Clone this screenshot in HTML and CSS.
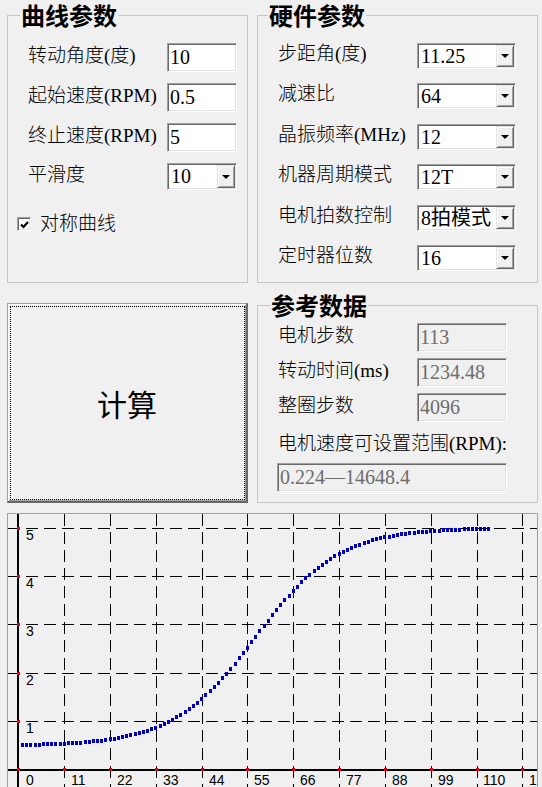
FILE: index.html
```html
<!DOCTYPE html>
<html lang="zh-CN">
<head>
<meta charset="utf-8">
<title>步进电机加减速曲线计算</title>
<link rel="stylesheet" href="styles.css">
</head>
<body>
<div class="app">
  <div class="row row-top">
    <fieldset class="group group-curve">
      <legend class="group-title">曲线参数</legend>
      <div class="form form-curve">
        <div class="field"><span class="label">转动角度(度)</span><div class="edit">10</div></div>
        <div class="field"><span class="label">起始速度(RPM)</span><div class="edit">0.5</div></div>
        <div class="field"><span class="label">终止速度(RPM)</span><div class="edit">5</div></div>
        <div class="field field-combo-sm"><span class="label">平滑度</span><div class="combo combo-sm"><span class="combo-value">10</span><span class="combo-btn"></span></div></div>
        <div class="check">
          <span class="check-box"><svg class="check-mark" viewBox="0 0 9 9" width="9" height="9"><path d="M1 4.5 L3.5 7 L8 2" /></svg></span>
          <span class="check-label">对称曲线</span>
        </div>
      </div>
    </fieldset>
    <fieldset class="group group-hw">
      <legend class="group-title">硬件参数</legend>
      <div class="form form-hw">
        <div class="field"><span class="label">步距角(度)</span><div class="combo"><span class="combo-value">11.25</span><span class="combo-btn"></span></div></div>
        <div class="field"><span class="label">减速比</span><div class="combo"><span class="combo-value">64</span><span class="combo-btn"></span></div></div>
        <div class="field"><span class="label">晶振频率(MHz)</span><div class="combo"><span class="combo-value">12</span><span class="combo-btn"></span></div></div>
        <div class="field"><span class="label">机器周期模式</span><div class="combo"><span class="combo-value">12T</span><span class="combo-btn"></span></div></div>
        <div class="field"><span class="label">电机拍数控制</span><div class="combo"><span class="combo-value">8拍模式</span><span class="combo-btn"></span></div></div>
        <div class="field"><span class="label">定时器位数</span><div class="combo"><span class="combo-value">16</span><span class="combo-btn"></span></div></div>
      </div>
    </fieldset>
  </div>

  <div class="row row-mid">
    <button class="calc" type="button">计算</button>
    <fieldset class="group group-ref">
      <legend class="group-title">参考数据</legend>
      <div class="form form-ref">
        <div class="field"><span class="label">电机步数</span><div class="edit edit-ro">113</div></div>
        <div class="field"><span class="label">转动时间(ms)</span><div class="edit edit-ro">1234.48</div></div>
        <div class="field"><span class="label">整圈步数</span><div class="edit edit-ro">4096</div></div>
        <div class="range-label">电机速度可设置范围(RPM):</div>
        <div class="edit edit-ro edit-range">0.224—14648.4</div>
      </div>
    </fieldset>
  </div>

  <div class="chart">
    <svg class="plot" id="plot" viewBox="8 514 529 288" width="529" height="288">
      <g class="grid">
        <line x1="8" y1="528.5" x2="537" y2="528.5"/>
        <line x1="8" y1="576.5" x2="537" y2="576.5"/>
        <line x1="8" y1="624.5" x2="537" y2="624.5"/>
        <line x1="8" y1="673.5" x2="537" y2="673.5"/>
        <line x1="8" y1="721.5" x2="537" y2="721.5"/>
        <line x1="64.5" y1="514" x2="64.5" y2="802"/>
        <line x1="110.5" y1="514" x2="110.5" y2="802"/>
        <line x1="156.5" y1="514" x2="156.5" y2="802"/>
        <line x1="202.5" y1="514" x2="202.5" y2="802"/>
        <line x1="247.5" y1="514" x2="247.5" y2="802"/>
        <line x1="293.5" y1="514" x2="293.5" y2="802"/>
        <line x1="339.5" y1="514" x2="339.5" y2="802"/>
        <line x1="385.5" y1="514" x2="385.5" y2="802"/>
        <line x1="431.5" y1="514" x2="431.5" y2="802"/>
        <line x1="477.5" y1="514" x2="477.5" y2="802"/>
        <line x1="522.5" y1="514" x2="522.5" y2="802"/>
      </g>
      <g class="axes">
        <line x1="8" y1="770" x2="537" y2="770"/>
        <line x1="18" y1="514" x2="18" y2="802"/>
      </g>
      <g class="ticks">
        <rect x="17" y="527" width="3" height="3"/>
        <rect x="17" y="575" width="3" height="3"/>
        <rect x="17" y="623" width="3" height="3"/>
        <rect x="17" y="672" width="3" height="3"/>
        <rect x="17" y="720" width="3" height="3"/>
        <rect x="17" y="768" width="3" height="3"/>
        <rect x="63" y="768" width="3" height="3"/>
        <rect x="109" y="768" width="3" height="3"/>
        <rect x="155" y="768" width="3" height="3"/>
        <rect x="201" y="768" width="3" height="3"/>
        <rect x="246" y="768" width="3" height="3"/>
        <rect x="292" y="768" width="3" height="3"/>
        <rect x="338" y="768" width="3" height="3"/>
        <rect x="384" y="768" width="3" height="3"/>
        <rect x="430" y="768" width="3" height="3"/>
        <rect x="476" y="768" width="3" height="3"/>
        <rect x="521" y="768" width="3" height="3"/>
      </g>
      <g class="labels">
        <text x="26" y="540">5</text>
        <text x="26" y="588">4</text>
        <text x="26" y="636">3</text>
        <text x="26" y="685">2</text>
        <text x="26" y="733">1</text>
        <text x="26" y="785">0</text>
        <text x="71" y="785">11</text>
        <text x="117" y="785">22</text>
        <text x="163" y="785">33</text>
        <text x="209" y="785">44</text>
        <text x="254" y="785">55</text>
        <text x="300" y="785">66</text>
        <text x="346" y="785">77</text>
        <text x="392" y="785">88</text>
        <text x="438" y="785">99</text>
        <text x="483" y="785">110</text>
        <text x="529" y="785">121</text>
      </g>
      <g class="curve" id="curve"></g>
    </svg>
  </div>
</div>
<script src="chart.js"></script>
</body>
</html>
```

FILE: styles.css
```css
* { box-sizing: border-box; }

html, body { margin: 0; padding: 0; }

body {
  width: 542px;
  height: 787px;
  overflow: hidden;
  background: #f0f0f0;
  color: #000;
  font-family: "Liberation Serif", "Noto Sans CJK SC", serif;
}

.app {
  display: flex;
  flex-direction: column;
  align-items: flex-start;
  padding-left: 7px;
}

.row {
  display: flex;
  align-items: flex-start;
  gap: 9px;
}

.row-mid { margin-top: 7px; }

/* group boxes */
.group {
  margin: 0;
  padding: 0;
  min-width: 0;
  border: 1px solid #c6c6c6;
}

.group-curve { width: 241px; height: 283px; }
.group-hw { width: 281px; height: 283px; }
.group-ref { width: 281px; height: 213px; }

.group-title {
  padding: 0 1px;
  font-family: "Noto Sans CJK SC", sans-serif;
  font-weight: 700;
  font-size: 24px;
  line-height: 30px;
}

.group-curve .group-title { margin-left: 12px; }
.group-hw .group-title { margin-left: 10px; }
.group-ref .group-title { margin-left: 12px; }

/* forms */
.form {
  display: flex;
  flex-direction: column;
}

.form-curve { padding-top: 13px; gap: 11px; }
.form-hw { padding-top: 13px; gap: 14.4px; }
.form-ref { padding-top: 3px; gap: 6px; }

.field {
  display: flex;
  align-items: center;
  padding-left: 20px;
}

.label {
  width: 139px;
  flex: none;
  font-size: 19px;
  font-weight: 300;
  line-height: 22px;
  padding-bottom: 4px;
  white-space: nowrap;
}

/* edit boxes */
.edit {
  width: 70px;
  height: 29px;
  padding: 0 0 0 2px;
  background: #fff;
  border: 1px solid;
  border-color: #a0a0a0 #ffffff #ffffff #a0a0a0;
  box-shadow: inset 1px 1px 0 #696969, inset -1px -1px 0 #e3e3e3;
  font-size: 20px;
  line-height: 27px;
  white-space: nowrap;
}

.edit-ro {
  width: 90px;
  background: #f0f0f0;
  color: #6d6d6d;
}

.edit-range {
  width: 230px;
  margin-left: 19px;
}

.range-label {
  margin-top: 5px;
  padding-left: 20px;
  height: 24px;
  font-size: 19px;
  font-weight: 300;
  line-height: 22px;
  white-space: nowrap;
}

/* combo boxes */
.combo {
  display: flex;
  width: 99px;
  height: 26px;
  padding: 1px;
  background: #fff;
  border: 1px solid;
  border-color: #a0a0a0 #ffffff #ffffff #a0a0a0;
  box-shadow: inset 1px 1px 0 #696969, inset -1px -1px 0 #e3e3e3;
}

.combo-sm {
  width: 70px;
  height: 27px;
}

.combo-value {
  flex: 1;
  min-width: 0;
  padding-left: 2px;
  font-size: 20px;
  line-height: 22px;
  white-space: nowrap;
  overflow: hidden;
}

.combo-btn {
  flex: none;
  width: 18px;
  display: flex;
  align-items: center;
  justify-content: center;
  background: #f0f0f0;
  border: 1px solid;
  border-color: #e3e3e3 #696969 #696969 #e3e3e3;
  box-shadow: inset 1px 1px 0 #ffffff, inset -1px -1px 0 #a0a0a0;
}

.combo-btn::after {
  content: "";
  width: 0;
  height: 0;
  border-left: 4px solid transparent;
  border-right: 4px solid transparent;
  border-top: 4px solid #000;
}

/* checkbox */
.check {
  display: flex;
  align-items: center;
  gap: 9px;
  margin-top: 13px;
  padding-left: 9px;
  height: 20px;
}

.check-box {
  width: 14px;
  height: 14px;
  display: flex;
  align-items: center;
  justify-content: center;
  background: #fff;
  border: 1px solid;
  border-color: #a0a0a0 #ffffff #ffffff #a0a0a0;
  box-shadow: inset 1px 1px 0 #696969, inset -1px -1px 0 #e3e3e3;
}

.check-mark path {
  fill: none;
  stroke: #000;
  stroke-width: 2.2;
}

.check-label {
  font-size: 19px;
  font-weight: 300;
  line-height: 22px;
}

/* calculate button */
.calc {
  width: 241px;
  height: 200px;
  margin: 13px 0 0 0;
  padding: 0;
  background: #f0f0f0;
  border: 1px solid;
  border-color: #a0a0a0 #696969 #696969 #a0a0a0;
  border-right-width: 2px;
  border-bottom-width: 2px;
  box-shadow: inset 1px 1px 0 #ffffff, inset -1px -1px 0 #a0a0a0;
  outline: 1px dotted #000;
  outline-offset: -4px;
  font-family: "Noto Sans CJK SC", sans-serif;
  font-size: 30px;
  color: #000;
}

/* chart */
.chart {
  margin-top: 10px;
  width: 531px;
  height: 290px;
  background: #f0f0f0;
  border: 1px solid;
  border-color: #a0a0a0 #a0a0a0 #ffffff #a0a0a0;
  overflow: hidden;
}

.plot { display: block; }

.grid line {
  stroke: #000;
  stroke-width: 1;
  stroke-dasharray: 12 6;
  shape-rendering: crispEdges;
}

.axes line {
  stroke: #000;
  stroke-width: 2;
  shape-rendering: crispEdges;
}

.ticks rect { fill: #e0001b; }

.labels text {
  font-family: "Liberation Sans", Arial, sans-serif;
  font-size: 14px;
  fill: #000;
}

.curve rect {
  fill: #0000c4;
  shape-rendering: crispEdges;
}
```

FILE: chart.js
```js
(function () {
  var ns = "http://www.w3.org/2000/svg";
  var g = document.getElementById("curve");
  var x0 = 18, y0 = 770;
  var sx = 45.8 / 11, sy = 48.4;
  var vStart = 0.5, vEnd = 5, steps = 113, smooth = 0.1;
  for (var t = 1; t <= steps; t++) {
    var v = vStart + (vEnd - vStart) / (1 + Math.exp(-smooth * (t - (steps + 1) / 2)));
    var x = Math.round(x0 + t * sx);
    var y = Math.round(y0 - v * sy);
    var r = document.createElementNS(ns, "rect");
    r.setAttribute("x", x - 1);
    r.setAttribute("y", y - 2);
    r.setAttribute("width", 3);
    r.setAttribute("height", 4);
    g.appendChild(r);
  }
})();
```
